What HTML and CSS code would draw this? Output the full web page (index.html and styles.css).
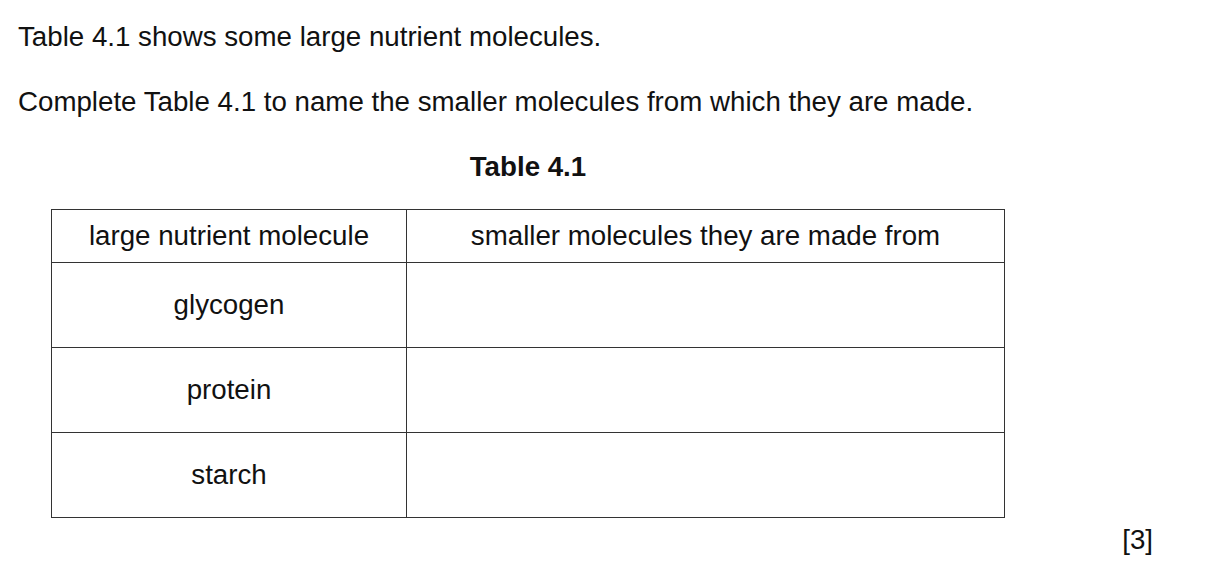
FILE: index.html
```html
<!DOCTYPE html>
<html>
<head>
<meta charset="utf-8">
<link rel="stylesheet" href="styles.css">
</head>
<body>
<div class="page">
  <p class="intro">Table 4.1 shows some large nutrient molecules.</p>
  <p class="task">Complete Table 4.1 to name the smaller molecules from which they are made.</p>
  <div class="caption">Table 4.1</div>
  <table class="nutrients">
    <tr class="head">
      <th class="col-a">large nutrient molecule</th>
      <th class="col-b">smaller molecules they are made from</th>
    </tr>
    <tr class="row"><td>glycogen</td><td></td></tr>
    <tr class="row"><td>protein</td><td></td></tr>
    <tr class="row"><td>starch</td><td></td></tr>
  </table>
  <div class="marks">[3]</div>
</div>
</body>
</html>
```

FILE: styles.css
```css
html, body {
  margin: 0;
  padding: 0;
  background: #fff;
}
body {
  font-family: "Liberation Sans", Arial, sans-serif;
  font-size: 27.7px;
  color: #111;
}
.page {
  width: 1220px;
  height: 588px;
  box-sizing: border-box;
  padding: 21px 0 0 18px;
  display: flex;
  flex-direction: column;
}
.intro, .task {
  margin: 0;
  line-height: 32px;
}
.task {
  margin-top: 33px;
}
.caption {
  font-weight: bold;
  width: 954px;
  margin-left: 33px;
  text-align: center;
  margin-top: 33px;
  line-height: 32px;
}
.nutrients {
  margin-left: 33px;
  margin-top: 26px;
  border-collapse: collapse;
  width: 954px;
  table-layout: fixed;
}
.nutrients th, .nutrients td {
  border: 1px solid #333;
  text-align: center;
  padding: 0;
  font-weight: normal;
  vertical-align: middle;
}
.col-a { width: 354px; }
.head th { height: 52px; }
.row td { height: 84px; }
.marks {
  align-self: flex-end;
  margin-right: 67px;
  margin-top: 6px;
  line-height: 32px;
}
```
